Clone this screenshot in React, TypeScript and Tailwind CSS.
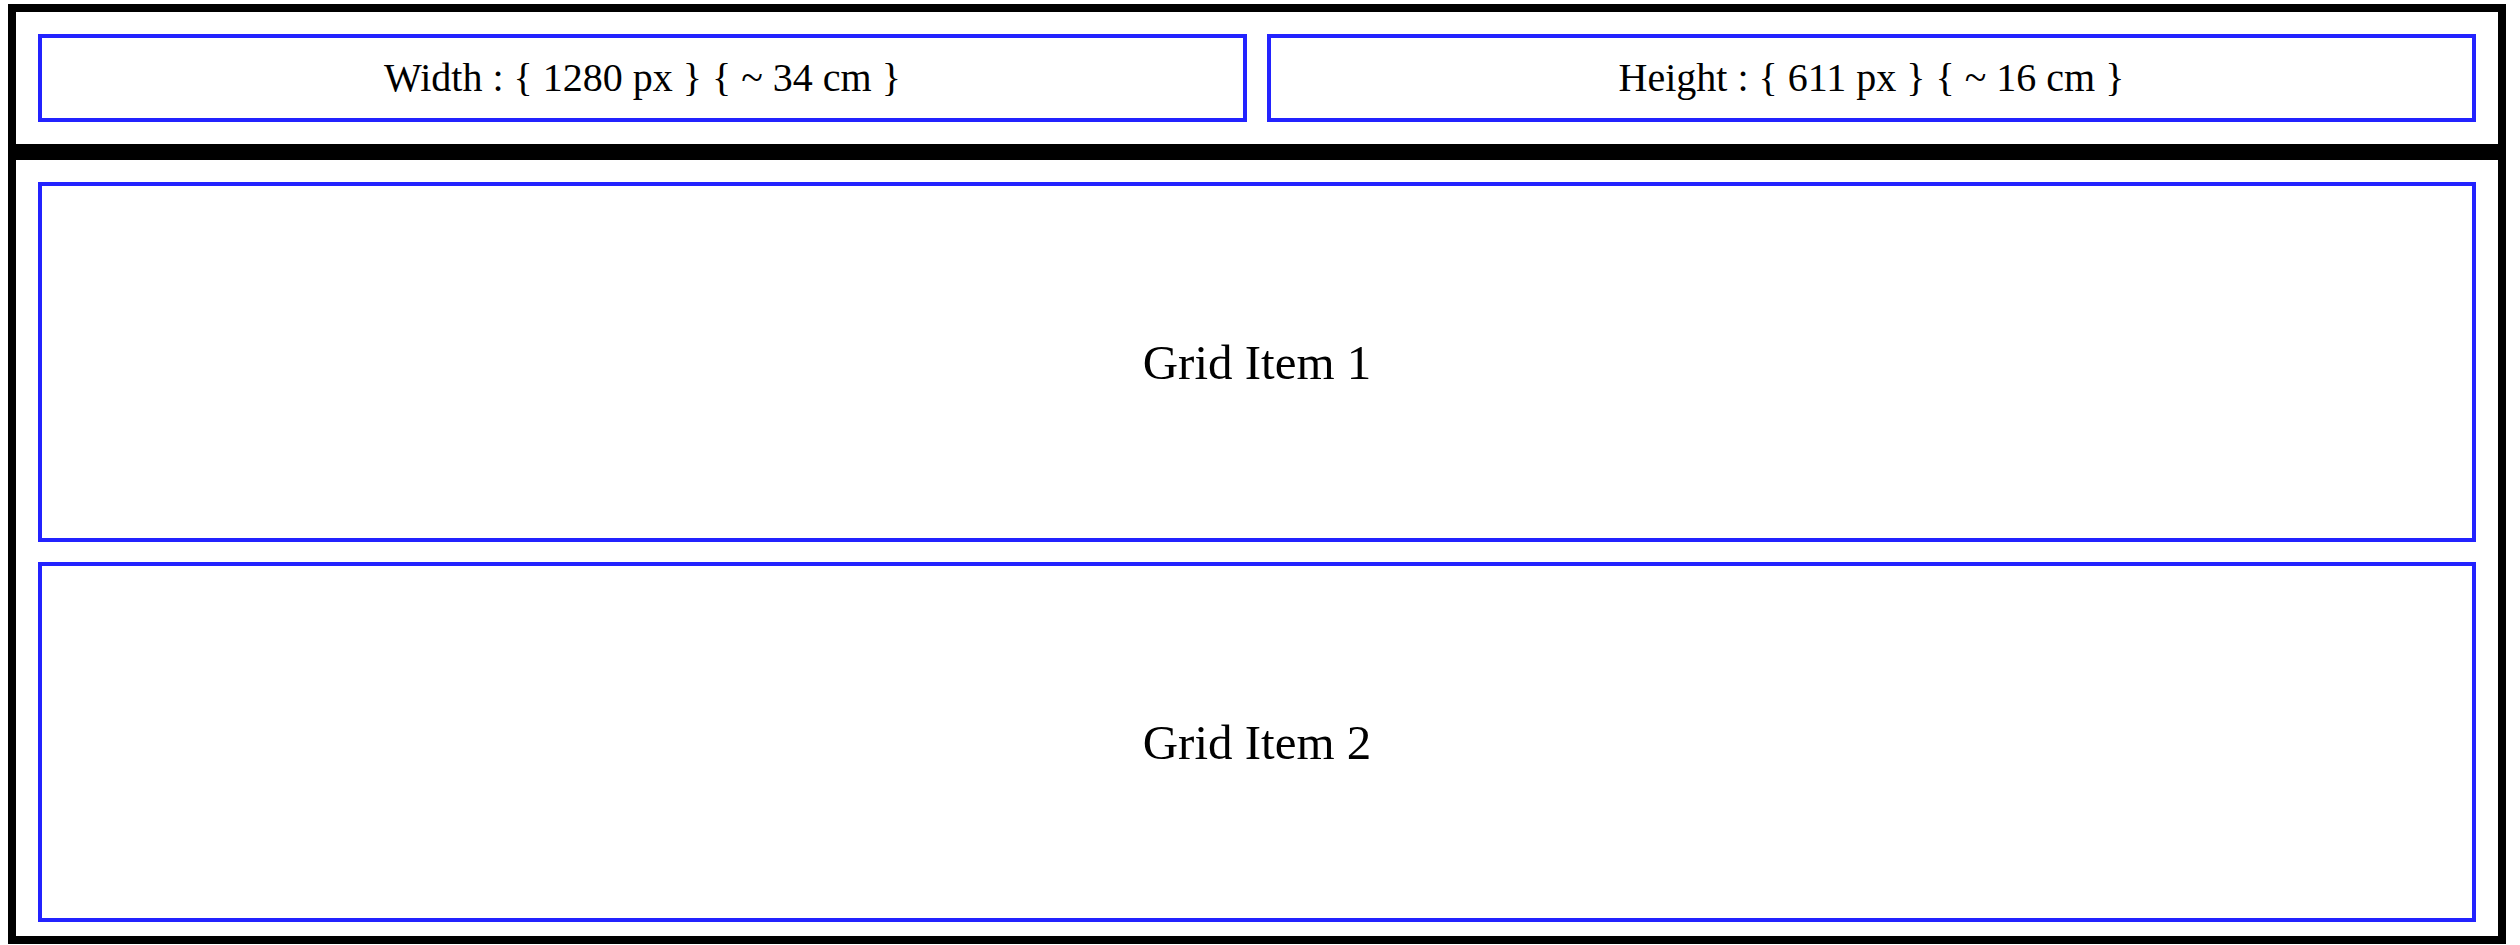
export default function App() {
  return (
    <div className="pt-[4px] pl-[8px] bg-white min-h-screen" style={{ fontFamily: '"Liberation Serif", "Times New Roman", serif' }}>
      {/* Dimensions bar */}
      <div className="w-[2498px] h-[148px] border-[8px] border-black p-[22px] grid grid-cols-2 gap-[20px]">
        <div className="border-[4px] border-[#2323ff] flex items-center justify-center text-[40px] text-black">
          Width : {'{'} 1280 px {'}'} {'{'} ~ 34 cm {'}'}
        </div>
        <div className="border-[4px] border-[#2323ff] flex items-center justify-center text-[40px] text-black">
          Height : {'{'} 611 px {'}'} {'{'} ~ 16 cm {'}'}
        </div>
      </div>

      {/* Grid */}
      <div className="w-[2498px] h-[792px] border-[8px] border-black pt-[22px] px-[22px] pb-[14px] grid grid-rows-2 gap-[20px]">
        <div className="border-[4px] border-[#2323ff] flex items-center justify-center pt-[2px] text-[49px] text-black">
          Grid Item 1
        </div>
        <div className="border-[4px] border-[#2323ff] flex items-center justify-center pt-[2px] text-[49px] text-black">
          Grid Item 2
        </div>
      </div>
    </div>
  )
}
